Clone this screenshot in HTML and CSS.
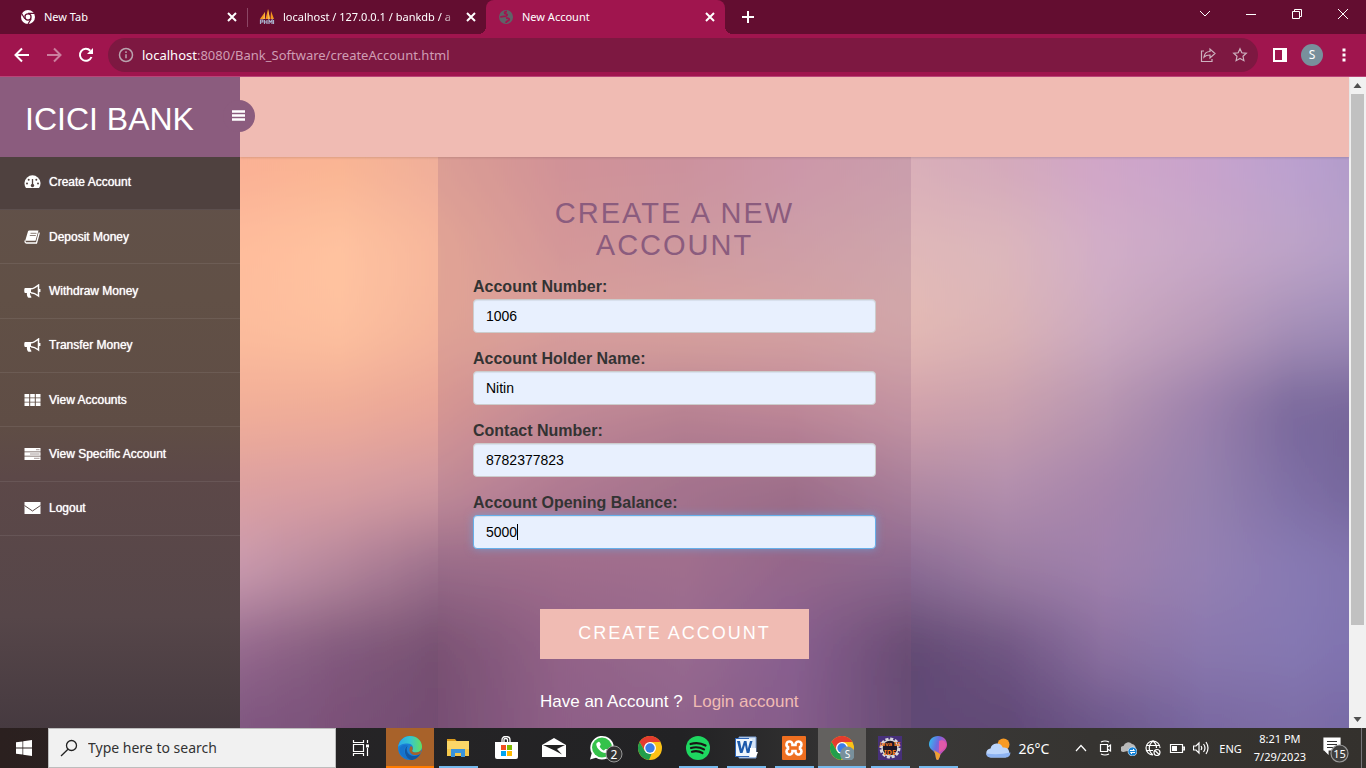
FILE: index.html
```html
<!DOCTYPE html>
<html lang="en">
<head>
<meta charset="utf-8">
<title>New Account</title>
<link rel="stylesheet" href="styles.css">
</head>
<body>
<header class="browser">
  <div class="tabstrip">
    <div class="tab">
      <svg class="favicon" viewBox="0 0 16 16"><circle cx="8" cy="8" r="7" fill="#fff"/><circle cx="8" cy="8" r="3.7" fill="#630d30"/><circle cx="8" cy="8" r="2.4" fill="#fff"/><path d="M8 4.300H14.600M4.800 9.800L1.600 4.500M11.200 9.800L8 15" stroke="#630d30" stroke-width="1.200"/></svg>
      <span class="tab-title">New Tab</span>
      <button class="tab-close" aria-label="Close tab"><svg viewBox="0 0 16 16"><path d="M4 4l8 8M12 4l-8 8"/></svg></button>
    </div>
    <div class="tab tab-divided">
      <svg class="favicon" viewBox="0 0 16 16"><path d="M1 10L6 3v7zM6.500 10L9 0l2 10zM11.500 10L12 2l3 8z" fill="#f6941d"/><path d="M4 10L6 3v7zM9 10V0l2 10z" fill="#f8b84a"/><path d="M1.500 15v-4h2.300v2H1.500M5.500 11v4M8 11v4M5.500 13H8M10 15v-4l1.500 2 1.500-2v4M14.500 11v4" fill="none" stroke="#a9b0cc" stroke-width="1.200"/></svg>
      <span class="tab-title fade">localhost / 127.0.0.1 / bankdb / a</span>
      <button class="tab-close" aria-label="Close tab"><svg viewBox="0 0 16 16"><path d="M4 4l8 8M12 4l-8 8"/></svg></button>
    </div>
    <div class="tab tab-active">
      <svg class="favicon" viewBox="0 0 16 16"><circle cx="8" cy="8" r="7" fill="#5f6368"/><path d="M9 2.500c-3 0-3 2-1 2.500s1 2-.5 2.300S3 7 2.500 8.500M8 9c2 0 4 .5 3 2s-3 1-3 3" fill="none" stroke="#a0154e" stroke-width="1.800"/></svg>
      <span class="tab-title">New Account</span>
      <button class="tab-close" aria-label="Close tab"><svg viewBox="0 0 16 16"><path d="M4 4l8 8M12 4l-8 8"/></svg></button>
    </div>
    <button class="new-tab" aria-label="New tab"><svg viewBox="0 0 16 16"><path d="M8 2v12M2 8h12"/></svg></button>
    <div class="window-controls">
      <button aria-label="Search tabs"><svg viewBox="0 0 16 16"><path d="M3 5l5 5 5-5"/></svg></button>
      <button aria-label="Minimize"><svg viewBox="0 0 16 16"><path d="M3 8.500h10"/></svg></button>
      <button aria-label="Restore"><svg viewBox="0 0 16 16"><path d="M3.500 5.500h7v7h-7zM5.500 5.500v-2h7v7h-2"/></svg></button>
      <button aria-label="Close window"><svg viewBox="0 0 16 16"><path d="M3 3l10 10M13 3L3 13"/></svg></button>
    </div>
  </div>
  <div class="toolbar">
    <button class="tool" aria-label="Back"><svg viewBox="0 0 16 16"><path d="M15 8H2M8 1.500L1.500 8 8 14.500"/></svg></button>
    <button class="tool dim" aria-label="Forward"><svg viewBox="0 0 16 16"><path d="M1 8h13M8 1.500L14.500 8 8 14.500"/></svg></button>
    <button class="tool" aria-label="Reload"><svg viewBox="0 0 16 16"><path d="M13.500 10A6 6 0 1 1 12.300 3.700"/><path d="M15 1v6H9z" fill="#fff" stroke="none"/></svg></button>
    <div class="omnibox">
      <svg class="info" viewBox="0 0 16 16"><circle cx="8" cy="8" r="6.500"/><path d="M8 7.200v4M8 4.300v1.600"/></svg>
      <span class="url"><b>localhost</b>:8080/Bank_Software/createAccount.html</span>
      <button class="omni-btn" aria-label="Share"><svg viewBox="0 0 16 16"><path d="M4 4H1.500v10.500H12V12M4 10c.5-4 3-5.500 6-5.500V2l5 4.500-5 4.500V8C7.500 8 5.500 8.500 4 10z"/></svg></button>
      <button class="omni-btn" aria-label="Bookmark"><svg viewBox="0 0 16 16"><path d="M8 1.800l1.800 4 4.500.5-3.300 3 .9 4.400L8 11.500l-3.900 2.200.9-4.400-3.300-3 4.500-.5z"/></svg></button>
    </div>
    <button class="tool panel-btn" aria-label="Side panel"><svg viewBox="0 0 16 16"><path d="M2 2h12v12H2z"/><path d="M10 1h5v14h-5z" fill="#fff" stroke="none"/></svg></button>
    <button class="avatar">S</button>
    <button class="tool menu-btn" aria-label="Menu"><svg viewBox="0 0 16 16"><path d="M6.500 1.500h3v3h-3zM6.500 6.500h3v3h-3zM6.500 11.500h3v3h-3z" fill="#fff" stroke="none"/></svg></button>
  </div>
</header>

<div class="viewport">
  <aside class="sidebar">
    <div class="brand">ICICI BANK
      <button class="toggle" aria-label="Toggle menu"><svg viewBox="0 0 14 12"><path d="M0 1.500h13M0 5.500h13M0 9.500h13" stroke="#fff" stroke-width="2.400"/></svg></button>
    </div>
    <nav class="nav">
      <a class="active" href="#"><svg viewBox="0 0 17 14"><path d="M2 13A8 8 0 1 1 15 13z" fill="#fff"/><path d="M8.500 10V4" stroke="#51413f" stroke-width="1.300"/><g fill="#51413f"><circle cx="8.500" cy="10.500" r="1.700"/><circle cx="3" cy="8.500" r="1"/><circle cx="4.700" cy="4.700" r="1"/><circle cx="12.300" cy="4.700" r="1"/><circle cx="14" cy="8.500" r="1"/></g></svg>Create Account</a>
      <a href="#"><svg viewBox="0 0 17 14"><path d="M15.300 2.500L12.500 13H2.500C1 13 .8 11.500 1.300 10.500" fill="none" stroke="#fff" stroke-width="1.300"/><path d="M5.500.500c-1 0-1.500.5-1.700 1.500L1.200 10.800H11.500L14.500.500z" fill="#fff"/><path d="M6.500 3.300h6M5.800 5.500h6" stroke="#8d8079" stroke-width="1"/></svg>Deposit Money</a>
      <a href="#"><svg viewBox="0 0 17 14"><path d="M1 4h6v5H6c0 2 .8 3 1.600 4.300-1 .8-3.200.6-3.800 0C3 11.700 2.600 10.500 3 9H1C0 9 0 4 1 4z" fill="#fff"/><path d="M7 4.800c2.500 0 5-1.800 7.500-3.800v11c-2.500-2-5-3.200-7.500-3.300M15.700 5v3" fill="none" stroke="#fff" stroke-width="1.500"/></svg>Withdraw Money</a>
      <a href="#"><svg viewBox="0 0 17 14"><path d="M1 4h6v5H6c0 2 .8 3 1.600 4.300-1 .8-3.200.6-3.800 0C3 11.700 2.600 10.500 3 9H1C0 9 0 4 1 4z" fill="#fff"/><path d="M7 4.800c2.500 0 5-1.800 7.500-3.800v11c-2.500-2-5-3.200-7.500-3.300M15.700 5v3" fill="none" stroke="#fff" stroke-width="1.500"/></svg>Transfer Money</a>
      <a href="#"><svg viewBox="0 0 17 14"><path d="M.500 1h4.700v3.400H.500zM6.200 1h4.600v3.400H6.200zM11.800 1h4.700v3.400h-4.700zM.500 5.300h4.700v3.400H.500zM6.200 5.300h4.600v3.400H6.200zM11.800 5.300h4.700v3.400h-4.700zM.500 9.600h4.700V13H.500zM6.200 9.600h4.600V13H6.200zM11.800 9.600h4.700V13h-4.700z" fill="#fff"/></svg>View Accounts</a>
      <a href="#"><svg viewBox="0 0 17 14"><path d="M.500 1h16v3.400H.500zM.500 5.300h16v3.400H.500zM.500 9.600h16V13H.500z" fill="#fff"/><path d="M12 2.700h3.500M6 7h9.500M10 11.300h5.500" stroke="#a59a9a" stroke-width="1"/></svg>View Specific Account</a>
      <a href="#"><svg viewBox="0 0 17 14"><path d="M.500 1h16v12H.500z" fill="#fff"/><path d="M.500 4.500l8 5.500 8-5.500" fill="none" stroke="#5a4947" stroke-width="1"/></svg>Logout</a>
    </nav>
  </aside>

  <main class="content">
    <div class="topbar"></div>
    <section class="stage">
      <svg class="backdrop" viewBox="0 0 1109 571" preserveAspectRatio="none" aria-hidden="true">
        <defs>
          <filter id="soft" x="0" y="0" width="1" height="1"><feGaussianBlur stdDeviation="0 32"/></filter>
          <linearGradient id="r1"><stop offset="0" stop-color="#fab094"/><stop offset=".09" stop-color="#f9b493"/><stop offset=".18" stop-color="#efae9a"/><stop offset=".29" stop-color="#e2a09e"/><stop offset=".4" stop-color="#dda0a6"/><stop offset=".5" stop-color="#dca6b4"/><stop offset=".6" stop-color="#d9aeb8"/><stop offset=".69" stop-color="#d4a9bb"/><stop offset=".78" stop-color="#d0a5c8"/><stop offset=".87" stop-color="#c8a3cc"/><stop offset=".95" stop-color="#bba0cf"/><stop offset="1" stop-color="#b39ccb"/></linearGradient>
          <linearGradient id="r2"><stop offset="0" stop-color="#ffbd9c"/><stop offset=".09" stop-color="#ffc3a0"/><stop offset=".18" stop-color="#f8b79c"/><stop offset=".29" stop-color="#e6a69f"/><stop offset=".4" stop-color="#dfa9a8"/><stop offset=".5" stop-color="#dfb0b2"/><stop offset=".6" stop-color="#e0b8b8"/><stop offset=".69" stop-color="#dcb7bc"/><stop offset=".78" stop-color="#d2aec8"/><stop offset=".87" stop-color="#c8a8c8"/><stop offset=".95" stop-color="#bea4c8"/><stop offset="1" stop-color="#b6a0c8"/></linearGradient>
          <linearGradient id="r3"><stop offset="0" stop-color="#fdbd9d"/><stop offset=".09" stop-color="#fec19f"/><stop offset=".18" stop-color="#f5b59b"/><stop offset=".29" stop-color="#edb1a4"/><stop offset=".4" stop-color="#ecb5a6"/><stop offset=".5" stop-color="#e8b5ab"/><stop offset=".6" stop-color="#e4bab4"/><stop offset=".69" stop-color="#dcb4b6"/><stop offset=".78" stop-color="#ccaac0"/><stop offset=".87" stop-color="#bb9cba"/><stop offset=".95" stop-color="#a690b8"/><stop offset="1" stop-color="#9f8cb8"/></linearGradient>
          <linearGradient id="r4"><stop offset="0" stop-color="#f2ae97"/><stop offset=".09" stop-color="#f0ac96"/><stop offset=".18" stop-color="#e9a597"/><stop offset=".29" stop-color="#cf959b"/><stop offset=".4" stop-color="#c48c98"/><stop offset=".5" stop-color="#cb929f"/><stop offset=".6" stop-color="#d2a2ab"/><stop offset=".69" stop-color="#caa0ad"/><stop offset=".78" stop-color="#b795b0"/><stop offset=".87" stop-color="#9a7fab"/><stop offset=".95" stop-color="#79689b"/><stop offset="1" stop-color="#76659a"/></linearGradient>
          <linearGradient id="r5"><stop offset="0" stop-color="#dda0a0"/><stop offset=".09" stop-color="#d99ea2"/><stop offset=".18" stop-color="#cf98a0"/><stop offset=".29" stop-color="#b98298"/><stop offset=".4" stop-color="#a87890"/><stop offset=".5" stop-color="#a0728c"/><stop offset=".6" stop-color="#b088a2"/><stop offset=".69" stop-color="#b38fad"/><stop offset=".78" stop-color="#a684ab"/><stop offset=".87" stop-color="#9480ad"/><stop offset=".95" stop-color="#7e6ea4"/><stop offset="1" stop-color="#75669c"/></linearGradient>
          <linearGradient id="r6"><stop offset="0" stop-color="#c99aae"/><stop offset=".09" stop-color="#b4869c"/><stop offset=".18" stop-color="#9a6e8c"/><stop offset=".29" stop-color="#a4718f"/><stop offset=".4" stop-color="#a67392"/><stop offset=".5" stop-color="#976a8e"/><stop offset=".6" stop-color="#8a6a94"/><stop offset=".69" stop-color="#9a7ca2"/><stop offset=".78" stop-color="#a081ad"/><stop offset=".87" stop-color="#9480b2"/><stop offset=".95" stop-color="#887ab3"/><stop offset="1" stop-color="#8376b0"/></linearGradient>
          <linearGradient id="r7"><stop offset="0" stop-color="#93678c"/><stop offset=".09" stop-color="#80587c"/><stop offset=".18" stop-color="#754f70"/><stop offset=".29" stop-color="#93648a"/><stop offset=".4" stop-color="#9a6e94"/><stop offset=".5" stop-color="#866094"/><stop offset=".6" stop-color="#5f4770"/><stop offset=".69" stop-color="#6e5482"/><stop offset=".78" stop-color="#8b70a0"/><stop offset=".87" stop-color="#8a78ae"/><stop offset=".95" stop-color="#8578b2"/><stop offset="1" stop-color="#8074b0"/></linearGradient>
          <linearGradient id="r8"><stop offset="0" stop-color="#7f5680"/><stop offset=".09" stop-color="#7a5078"/><stop offset=".18" stop-color="#734d72"/><stop offset=".29" stop-color="#8f618a"/><stop offset=".4" stop-color="#91658f"/><stop offset=".5" stop-color="#845d8e"/><stop offset=".6" stop-color="#604a76"/><stop offset=".69" stop-color="#604876"/><stop offset=".78" stop-color="#6b568a"/><stop offset=".87" stop-color="#7867a0"/><stop offset=".95" stop-color="#7c6da6"/><stop offset="1" stop-color="#786aa6"/></linearGradient>
        </defs>
        <g filter="url(#soft)">
          <rect y="-150" width="1109" height="201" fill="url(#r1)"/>
          <rect y="50" width="1109" height="81" fill="url(#r2)"/>
          <rect y="130" width="1109" height="81" fill="url(#r3)"/>
          <rect y="210" width="1109" height="81" fill="url(#r4)"/>
          <rect y="290" width="1109" height="81" fill="url(#r5)"/>
          <rect y="370" width="1109" height="81" fill="url(#r6)"/>
          <rect y="450" width="1109" height="81" fill="url(#r7)"/>
          <rect y="530" width="1109" height="200" fill="url(#r8)"/>
        </g>
      </svg>
      <form class="card" action="#">
        <h1>CREATE A NEW<br>ACCOUNT</h1>
        <div class="field"><label for="number">Account Number:</label><input id="number" type="text" value="1006"></div>
        <div class="field"><label for="holder">Account Holder Name:</label><input id="holder" type="text" value="Nitin"></div>
        <div class="field"><label for="contact">Contact Number:</label><input id="contact" type="text" value="8782377823"></div>
        <div class="field focused"><label for="balance">Account Opening Balance:</label><input id="balance" type="text" value="5000"><i class="caret"></i></div>
        <div class="actions">
          <button class="submit" type="button">CREATE ACCOUNT</button>
          <p>Have an Account ?<a href="#">Login account</a></p>
        </div>
      </form>
    </section>
  </main>

  <div class="scrollbar" aria-hidden="true">
    <svg viewBox="0 0 17 17"><path d="M8.500 6l4 5h-8z" fill="#505050"/></svg>
    <div class="track"><div class="thumb"></div></div>
    <svg viewBox="0 0 17 17"><path d="M8.500 11l4-5h-8z" fill="#505050"/></svg>
  </div>
</div>

<footer class="taskbar">
  <button class="start" aria-label="Start"><svg viewBox="0 0 16 16" width="16" height="16"><path d="M0 2.300L6.500 1.400v6.200H0zM7.200 1.300L16 0v7.600H7.200zM0 8.400h6.500v6.200L0 13.700zM7.200 8.400H16V16l-8.800-1.300z" fill="#fff"/></svg></button>
  <label class="search"><svg viewBox="0 0 18 18" width="18" height="18"><circle cx="11.500" cy="6.500" r="5"/><path d="M8 10.200L1 17"/></svg><input type="text" placeholder="Type here to search" aria-label="Search"></label>
  <button class="taskview" aria-label="Task view"><svg viewBox="0 0 18 16" width="18" height="16"><path d="M1.500 0v2.500h10V0M1.500 16v-2.500h10V16M1.500 4.500h10v7h-10zM15.500 0v3M15.500 8v8" fill="none" stroke="#fff" stroke-width="1.200"/><path d="M14 4.500h3v3h-3z" fill="#fff"/></svg></button>
  <div class="apps">
    <button class="app alert" aria-label="Edge"><svg viewBox="0 0 24 24"><defs><linearGradient id="e1" x1="0" x2="1"><stop offset="0" stop-color="#2aa7e8"/><stop offset=".5" stop-color="#35c6d0"/><stop offset="1" stop-color="#66e05c"/></linearGradient></defs><circle cx="12" cy="12" r="12" fill="#1a7fd6"/><path d="M0 11.500C1 4.500 6 0 12 0c7 0 12 5 12 10.500 0 4-3 6-6 6-3.500 0-4.500-1.500-3.500-2.700C16 11 14 7.500 9.500 7.500 5 7.500 1 9 0 11.500z" fill="url(#e1)"/><path d="M9.500 9c-6 4-3 13 4 14.600C9 24.500 2 21 1.500 14 1.800 10 5 8.500 9.500 9z" fill="#1573cc"/><path d="M9.800 9.500C7 14 10 20 16 20c3 0 5-1 6.500-2.500C20.500 21.500 17 24 13 24 7 22 4.500 13 9.800 9.500z" fill="#1457a0"/><path d="M14.500 13.800c-1 1.200 0 2.700 3.500 2.700 2 0 4-.8 5.200-2.400l-.7 3.300C20 19 17.500 19.300 15 18.700 11 17.500 10.500 12 13 10c1.500.8 2.200 2.500 1.500 3.800z" fill="#a8622a"/></svg></button>
    <button class="app open" aria-label="File Explorer"><svg viewBox="0 0 24 24"><path d="M1 3h8l2 2.500h-10z" fill="#d99a1c"/><path d="M1 5h22v15H1z" fill="#fbd667"/><path d="M1 13h22v7H1z" fill="#f5c84c"/><path d="M5 21v-8h14v8h-4v-4H9v4z" fill="#3a94dc"/></svg></button>
    <button class="app" aria-label="Store"><svg viewBox="0 0 24 24"><path d="M8 7V4q0-3.500 4-3.500T16 4v3M10 7V3.500q0-1 1.500-1T13.500 3.500V6" fill="none" stroke="#fff" stroke-width="1.300"/><path d="M1 6h23v15q0 2-2 2H3q-2 0-2-2z" fill="#fff"/><path d="M7 9h5v5H7z" fill="#f25022"/><path d="M13 9h5v5h-5z" fill="#7fba00"/><path d="M7 15h5v5H7z" fill="#00a4ef"/><path d="M13 15h5v5h-5z" fill="#ffb900"/></svg></button>
    <button class="app" aria-label="Mail"><svg viewBox="0 0 24 24"><path d="M0 9l12-7 12 7v12H0z" fill="#fff"/><path d="M1 9h22l-8 4 5 5.500-8.500-4.500z" fill="#222"/></svg></button>
    <button class="app" aria-label="WhatsApp"><svg class="wide" viewBox="0 0 34 28"><path d="M1 24.500l1.700-6.200A11.800 11.800 0 1 1 7 22.800z" fill="#fff"/><circle cx="13" cy="12.500" r="10" fill="#35c24a"/><path d="M8.500 7.500c1.500-1.500 2.500-.5 3.200 2 .2.800-1 1.300-1 2 .8 1.800 2 3 4 4 .8 0 1.300-1.500 2-1.400 3 1 3 1.600 2 3-3 3-11-2-11.400-7.500 0-1 .4-1.600 1.200-2.100z" fill="#fff"/><circle cx="25" cy="19" r="8" fill="#333" stroke="#999"/><text x="25" y="24" text-anchor="middle" font-size="12">2</text></svg></button>
    <button class="app" aria-label="Chrome"><svg viewBox="0 0 24 24"><circle cx="12" cy="12" r="12" fill="#fbc116"/><path d="M1.600 6A12 12 0 0 1 22.400 6H12L7 15z" fill="#e33b2e"/><path d="M1.600 6L6.800 15l5.200 3 1.500 0L11 24A12 12 0 0 1 1.600 6z" fill="#229e4c"/><circle cx="12" cy="12" r="6" fill="#fff"/><circle cx="12" cy="12" r="4.700" fill="#3b7de8"/></svg></button>
    <button class="app open" aria-label="Spotify"><svg viewBox="0 0 24 24"><circle cx="12" cy="12" r="12" fill="#1ed760"/><path d="M4.500 8c5-1.500 10.500-1 15 1.500M5 12c4.500-1.300 9-.8 13 1.400M6 15.800c3.500-1 7.500-.5 10.500 1.200" fill="none" stroke="#191414" stroke-width="2.200" stroke-linecap="round"/></svg></button>
    <button class="app open" aria-label="Word"><svg viewBox="0 0 24 24"><path d="M5 1h17v21H5z" fill="#d5e4f6" stroke="#7ca0d4"/><path d="M1 2h14v19H1z" fill="#2b63b5"/><path d="M2 3h16v17H2z" fill="#eef5fc"/><path d="M3 5h3l1.500 8L10 5h2.500l1.300 8L16 5h2.500l-3.200 12h-2.600L11 9l-2.500 8H6z" fill="#1d5aab"/><path d="M16 12h6v4h2l-2 5h-6z" fill="#fff"/></svg></button>
    <button class="app open" aria-label="XAMPP"><svg viewBox="0 0 24 24"><rect width="24" height="24" rx="1" fill="#ee6f20"/><path d="M7.500 5.500a3 3 0 0 1 3 3v.5h3v-.5a3 3 0 1 1 4.500 2.600v1.800a3 3 0 1 1-4.500 2.600v-.5h-3v.5a3 3 0 1 1-4.500-2.600v-1.800a3 3 0 0 1 1.500-5.600z" fill="none" stroke="#fff" stroke-width="2.600"/></svg></button>
    <button class="app open current" aria-label="Chrome profile S"><svg viewBox="0 0 24 24"><circle cx="12" cy="12" r="12" fill="#fbc116"/><path d="M1.600 6A12 12 0 0 1 22.400 6H12L7 15z" fill="#e33b2e"/><path d="M1.600 6L6.800 15l5.200 3 1.500 0L11 24A12 12 0 0 1 1.600 6z" fill="#229e4c"/><circle cx="12" cy="12" r="6" fill="#fff"/><circle cx="12" cy="12" r="4.700" fill="#3b7de8"/><circle cx="17.500" cy="18" r="7.500" fill="#78909c"/><text x="17.500" y="21.500" text-anchor="middle" font-size="10">S</text></svg></button>
    <button class="app open" aria-label="Java EE IDE"><svg viewBox="0 0 24 24"><path d="M0 0h24v24H0z" fill="#47307a"/><circle cx="12" cy="12" r="9" fill="#1b1626" stroke="#d8d8dc" stroke-width="3" stroke-dasharray="3 1.700"/><circle cx="12" cy="12" r="8" fill="#1b1626" stroke="#d8d8dc" stroke-width="1.500"/><text class="java" x="12" y="10" text-anchor="middle" font-size="6">Java EE</text><text class="java" x="12" y="19" text-anchor="middle" font-size="7">IDE</text></svg></button>
    <button class="app open" aria-label="Paint 3D"><svg viewBox="0 0 24 24"><defs><linearGradient id="p1" x1="0" y1="0" x2="1" y2=".4"><stop offset="0" stop-color="#2cc8f0"/><stop offset=".5" stop-color="#6b6be0"/><stop offset="1" stop-color="#e846a8"/></linearGradient></defs><path d="M12 0c5.500 0 9 4 9 8.500 0 5-4.500 7-6.500 10-1 2-1.300 5.500-3 5.500-2 0-1.500-4-2.500-6.500C7.500 14 3 13 3 8.500 3 4 6.500 0 12 0z" fill="url(#p1)"/><path d="M8 14c2 2 4 2 6.500 4.500-1 2-1.300 5.500-3 5.500-2 0-1.500-4-2.500-6.500z" fill="#f0a030"/><path d="M13 5c4-2 7 1 7 4-1 4-5 6-7 8z" fill="#e05aa8"/></svg></button>
  </div>
  <div class="tray">
    <span class="weather"><svg viewBox="0 0 26 20" width="26" height="20"><circle cx="17.500" cy="6.500" r="6" fill="#f79a24"/><path d="M5 19.500a4.500 4.500 0 0 1-.5-9 6.500 6.500 0 0 1 12.300-.9A5 5 0 1 1 19.500 19.500z" fill="#bcd5fb"/><path d="M5 19.500q-4.500 0-4.800-4 12 2 24.300-1-.4 5-5 5z" fill="#8db3f2"/></svg>26°C</span>
    <svg viewBox="0 0 16 16"><path d="M3 11l5-5.500L13 11"/></svg>
    <svg viewBox="0 0 16 16"><path d="M4 2q4-2 8 0M4 14q4 2 8 0M3.500 4.500h7v7h-7zM10.500 7l3-2v6l-3-2"/></svg>
    <svg viewBox="0 0 16 16"><path d="M2.500 12a3 3 0 0 1 0-6A5 5 0 0 1 11 4a4 4 0 0 1 3.500 5z" fill="#b8b8b8" stroke="none"/><circle cx="11.500" cy="11.500" r="4.500" fill="#1683d8" stroke="#fff" stroke-width=".6"/><path d="M9 10.500h4.500l-1.500-1.500M14 12.500H9.500l1.500 1.500" stroke-width="1"/></svg>
    <svg viewBox="0 0 16 16"><path d="M8 15A7 7 0 1 1 15 8M1.500 5.500h13M1.500 10.500H8M8 1C3 5 3 11 8 15M8 1c2.500 2 3.500 4.500 3.500 7"/><circle cx="12" cy="12.500" r="3"/><path d="M10 10.500l4 4"/></svg>
    <svg viewBox="0 0 16 16"><path d="M1.500 4.500h12v8h-12zM14 7h1.500v3H14z"/><path d="M3 6h5v5H3z" fill="#fff" stroke="none"/></svg>
    <svg viewBox="0 0 16 16"><path d="M.500 6h2.500l3-3v10l-3-3H.500zM8 6q1.500 2 0 4M10.500 4q3 4 0 8M13 2q4 6 0 12"/></svg>
    <span class="lang">ENG</span>
    <span class="clock">8:21 PM<br>7/29/2023</span>
    <button class="notify" aria-label="Notifications"><svg viewBox="0 0 26 26" width="26" height="26"><path d="M1 1h16v12H5v3.500L1.500 13H1z" fill="#fff"/><path d="M4 4.500h10M4 7.500h10M4 10.500h7" stroke="#333" stroke-width="1"/><circle cx="16.500" cy="16.500" r="8.500" fill="#3f3e3c" stroke="#999"/><text x="16.500" y="20.500" text-anchor="middle" font-size="11">15</text></svg></button>
  </div>
</footer>
</body>
</html>
```
FILE: styles.css
```css
* { box-sizing: border-box; }
body {
  margin: 0;
  min-height: 100vh;
  display: flex;
  flex-direction: column;
  font-family: "Liberation Sans", Arial, sans-serif;
  color: #333;
}
button { border: 0; padding: 0; margin: 0; background: none; color: inherit; font: inherit; }
svg { display: block; flex: none; }

/* Browser frame */
.browser { font-family: "Noto Sans", "Open Sans", sans-serif; color: #fff; background: #a0154e; border-bottom: 1px solid #b94478; }
.browser svg { width: 16px; height: 16px; fill: none; stroke: #fff; stroke-width: 1; }
.browser .favicon { stroke: none; }
.tabstrip { display: flex; align-items: center; height: 34px; padding-left: 8px; background: #630d30; }
.tab { display: flex; align-items: center; gap: 8px; width: 239px; height: 34px; padding: 0 7px 0 12px; font-size: 11px; position: relative; }
.tab-title { flex: 1; overflow: hidden; white-space: nowrap; line-height: 18px; }
.tab-title.fade { margin-right: -4px; mask-image: linear-gradient(90deg, #000 90%, transparent 100%); }
.tab-close svg { stroke-width: 2; }
.tab-divided::before { content: ""; position: absolute; left: 0; top: 8px; width: 1px; height: 19px; background: #8c4665; }
.tab-active { background: #a0154e; border-radius: 8px 8px 0 0; }
.tab-active::before, .tab-active::after { content: ""; position: absolute; bottom: 0; width: 8px; height: 8px; }
.tab-active::before { left: -8px; background: radial-gradient(circle at 0 0, #630d30 8px, #a0154e 8px); }
.tab-active::after { right: -8px; background: radial-gradient(circle at 100% 0, #630d30 8px, #a0154e 8px); }
.new-tab { margin-left: 15px; }
.new-tab svg { stroke-width: 2; }
.window-controls { display: flex; gap: 30px; margin-left: auto; padding: 0 15px 6px 0; }
.toolbar { display: flex; align-items: center; gap: 16px; padding: 4px 14px; height: 42px; }
.tool svg { stroke-width: 2; }
.tool.dim { opacity: .45; }
.omnibox { flex: 1; display: flex; align-items: center; gap: 8px; height: 34px; padding: 0 10px; margin-left: -2px; border-radius: 17px; background: #7d1841; }
.omnibox .info { stroke: #b9a3ae; stroke-width: 1.5; }
.url { flex: 1; font-size: 13px; line-height: 20px; color: #cf9db4; }
.url b { font-weight: 400; color: #fff; }
.omni-btn { margin-left: 8px; }
.omni-btn svg { stroke: #cdb2bf; stroke-width: 1.2; }
.panel-btn { margin-left: -2px; }
.avatar { width: 22px; height: 22px; border-radius: 50%; background: #78909c; font-size: 12px; line-height: 22px; margin: 0 -3px 0 -3px; }

/* Page */
.viewport { flex: 1; display: flex; overflow: hidden; }
.sidebar { flex: none; width: 240px; background: linear-gradient(#61514a 80px, #615046 220px, #5f4d45 350px, #5c4848 400px, #564649 540px, #463a40 100%); }
.brand { position: relative; z-index: 2; height: 80px; padding: 4px 25px 0; background: #8b5c7e; color: #fff; font-size: 32px; line-height: 76px; white-space: nowrap; }
.toggle { position: absolute; right: -15px; top: 23px; width: 32px; height: 32px; border-radius: 50%; background: #8b5c7e; padding-left: 9px; }
.toggle svg { width: 14px; height: 12px; }
.nav { display: flex; flex-direction: column; height: 379px; }
.nav a { flex: 1; display: flex; align-items: center; gap: 8px; padding-left: 24px; border-bottom: 1px solid rgba(255, 255, 255, .08); color: #fff; font-size: 12px; text-decoration: none; text-shadow: 0 0 1px #fff; }
.nav a.active { flex: none; height: 53px; padding-bottom: 3px; background: #4f413f; }
.nav svg { width: 17px; height: 14px; }
.content { flex: 1; display: flex; flex-direction: column; min-width: 0; }
.topbar { height: 80px; background: #f0bbb3; box-shadow: 0 1px 2px rgba(0, 0, 0, .12); position: relative; z-index: 1; }
.stage { flex: 1; position: relative; display: flex; }
.backdrop { position: absolute; inset: 0; width: 100%; height: 100%; }
.card { position: relative; width: 473px; margin-left: 198px; padding: 40px 35px 0; background: rgba(139, 92, 126, .2); }
.card h1 { margin: 0 0 15px; color: #8b5c7e; font-size: 29px; font-weight: 400; line-height: 32px; letter-spacing: 2px; text-align: center; }
.field { position: relative; display: flex; flex-direction: column; margin-bottom: 15px; }
.field label { margin-bottom: 1px; font-size: 16px; font-weight: 700; line-height: 22px; }
.field input { height: 34px; padding: 6px 12px; border: 1px solid #ccc; border-radius: 4px; background: #e8f0fe; color: #000; font: 14px/20px "Liberation Sans", Arial, sans-serif; box-shadow: inset 0 1px 1px rgba(0, 0, 0, .075); outline: 0; }
.field.focused input { border-color: #66afe9; box-shadow: inset 0 1px 1px rgba(0, 0, 0, .075), 0 0 8px rgba(102, 175, 233, .6); }
.caret { position: absolute; left: 44px; bottom: 9px; width: 1px; height: 16px; background: #000; }
.actions { margin: 60px 67px 0; }
.submit { display: block; width: 100%; height: 50px; padding-bottom: 2px; background: #f0bbb3; color: #fff; font-size: 18px; letter-spacing: 2px; white-space: nowrap; }
.actions p { margin: 32px 0 0; color: #fff; font-size: 17px; line-height: 22px; white-space: nowrap; }
.actions p a { margin-left: 10px; color: #f0bbb3; text-decoration: none; }
.scrollbar { flex: none; display: flex; flex-direction: column; width: 17px; background: #f1f1f1; }
.scrollbar svg { width: 17px; height: 17px; }
.track { flex: 1; padding: 0 2px; }
.thumb { height: 86%; background: #c1c1c1; }

/* Taskbar */
.taskbar { display: flex; align-items: stretch; height: 40px; background: linear-gradient(90deg, #2b201f, #252426 28%, #222224 50%, #3a3938 65%, #363431 80%, #34312d); color: #fff; font-family: "Noto Sans", "Open Sans", sans-serif; }
.taskbar button { display: flex; align-items: center; justify-content: center; }
.taskbar text { font-family: "Noto Sans", "Open Sans", sans-serif; fill: #fff; }
.taskbar text.java { fill: #f57c1f; font-weight: 700; }
.start { width: 48px; }
.search { flex: none; display: flex; align-items: center; gap: 10px; width: 288px; padding-left: 11px; background: #f1f1f1; border: 1px solid #bdbdbd; }
.search svg { fill: none; stroke: #222; stroke-width: 1.3; }
.search input { flex: 1; min-width: 0; border: 0; padding: 0; outline: 0; background: none; font: 14px/20px "Noto Sans", "Open Sans", sans-serif; }
.search input::placeholder { color: #333; }
.taskview { width: 50px; }
.apps { display: flex; }
.app { width: 48px; border: solid transparent; border-width: 2px 0; }
.app svg { width: 24px; height: 24px; }
.app svg.wide { width: 34px; height: 28px; margin: 2px 0 0 8px; }
.taskbar .open { background: linear-gradient(#76b9ed, #76b9ed) center bottom / 39px 2px no-repeat border-box; }
.taskbar .current { background: linear-gradient(#76b9ed, #76b9ed) center bottom / 48px 2px no-repeat border-box, #63615f; }
.taskbar .alert { background: #a8622a; border-bottom-color: #ff7b00; }
.tray { display: flex; align-items: center; gap: 8px; margin-left: auto; padding-right: 4px; font-size: 11px; }
.tray svg { width: 16px; height: 16px; fill: none; stroke: #fff; stroke-width: 1.2; }
.tray .weather { display: flex; align-items: center; gap: 6px; margin-right: 16px; font-size: 14px; }
.tray .weather svg { width: 26px; height: 20px; stroke: none; }
.lang { margin-left: 2px; }
.clock { margin: 0 9px 0 4px; line-height: 18px; text-align: center; }
.tray .notify { height: 40px; padding-right: 12px; border-right: 1px solid #77757a; }
.tray .notify svg { width: 26px; height: 26px; margin-top: 4px; }
.tray .notify text { stroke: none; }
```
